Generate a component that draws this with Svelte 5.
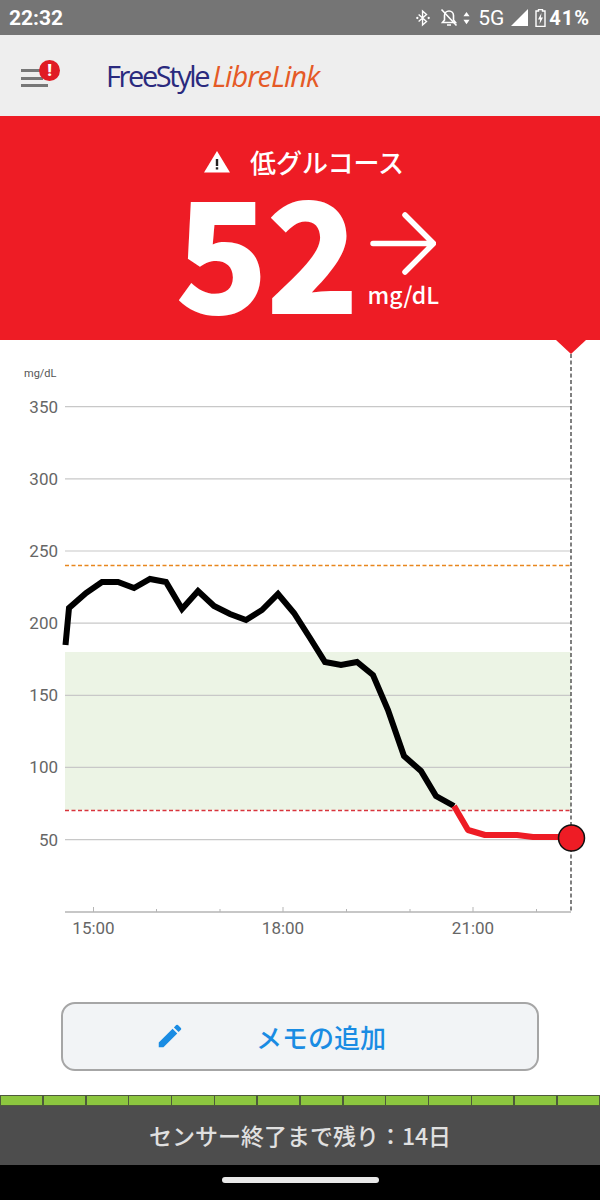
<script>
  const yLabels = [350, 300, 250, 200, 150, 100, 50];
  const yOf = (v) => 911.8 - v * 1.4433;

  const black =
    '65.5,645 69,608 86,593 102,582 118,582 134,588 150,579 166,582 182,609 198,591 214,606 230,614 246,620 262,610 278,594 294,613 310,638 325,662 341,665 357,662 373,675 388,710 404,756 421,771 436,796 454,806';
  const red = '454,806 468,830 485,835 517,835 533,837 571,837';

  const ticks = [
    { x: 93.5, label: '15:00' },
    { x: 156.5 },
    { x: 220 },
    { x: 283, label: '18:00' },
    { x: 346.5 },
    { x: 410 },
    { x: 473, label: '21:00' },
    { x: 536.5 }
  ];

  const segments = Array.from({ length: 14 });
</script>

<div class="screen">
  <div class="status">
    <span class="time">22:32</span>
    <div class="status-right">
      <svg width="14" height="18" viewBox="0 0 16 18" class="bt">
        <path d="M3 5l9 8-4.500 4V1L12 5l-9 8" fill="none" stroke="#fff" stroke-width="1.600" />
        <circle cx="1.500" cy="9" r="1.300" fill="#fff" />
        <circle cx="14.500" cy="9" r="1.300" fill="#fff" />
      </svg>
      <svg width="18" height="19" viewBox="0 0 18 19" class="bell">
        <path d="M2.500 14.500h13l-2-2.500V7.500a4.500 4.500 0 0 0-9 0V12z" fill="none" stroke="#fff" stroke-width="1.600" />
        <path d="M7 17h4M1.500 1.500l15 16" stroke="#fff" stroke-width="1.600" />
      </svg>
      <svg width="7" height="16" viewBox="0 0 8 16" class="updown">
        <path d="M4 1l3.500 5h-7zM4 15l3.500-5h-7z" fill="#fff" />
      </svg>
      <span class="net">5G</span>
      <svg width="17" height="17" viewBox="0 0 17 17" class="signal">
        <path d="M17 0v17H0z" fill="#fff" />
      </svg>
      <svg width="11" height="18" viewBox="0 0 11 18" class="batt">
        <path d="M3.500 0.500h4v1.500h2.500v15.500H1V2h2.500z" fill="none" stroke="#fff" stroke-width="1.400" />
        <path d="M6.500 4L3 10.500h2.200L4.500 15 8 8.500H5.800z" fill="#fff" />
      </svg>
      <span class="pct">41%</span>
    </div>
  </div>

  <header class="appbar">
    <div class="menu">
      <span class="line short"></span>
      <span class="line short"></span>
      <span class="line"></span>
      <span class="badge">!</span>
    </div>
    <div class="logo"><span class="free">FreeStyle</span><span class="libre">LibreLink</span></div>
  </header>

  <section class="alert">
    <div class="title">
      <svg width="28" height="24" viewBox="0 0 28 24">
        <path d="M14 2l13 21.500H1z" fill="#fff" />
        <path d="M12.800 10h2.400v7h-2.400zM12.800 18.200h2.400v2.400h-2.400z" fill="#222" />
      </svg>
      <span>低グルコース</span>
    </div>
    <div class="reading">
      <span class="value">52</span>
      <div class="side">
        <svg width="66" height="66" viewBox="0 0 66 66">
          <path d="M3 32.500h58M35 4l28.500 28.500L35 61" fill="none" stroke="#fff" stroke-width="5.500" stroke-linecap="round" stroke-linejoin="round" />
        </svg>
        <span class="unit">mg/dL</span>
      </div>
    </div>
    <span class="pointer"></span>
  </section>

  <section class="chart">
    <svg width="600" height="630" viewBox="0 340 600 630">
      <rect x="65" y="652" width="506" height="158" fill="#ecf4e5" />
      <text x="24" y="376.500" class="axis-unit">mg/dL</text>
      {#each yLabels as v}
        <line x1="65" x2="571" y1={yOf(v)} y2={yOf(v)} class="grid" />
        <text x="58" y={yOf(v) + 6} text-anchor="end" class="label">{v}</text>
      {/each}
      <line x1="65" x2="571" y1="565.500" y2="565.500" stroke="#e8861e" stroke-width="1.300" stroke-dasharray="4 2.500" />
      <line x1="65" x2="571" y1="810.500" y2="810.500" stroke="#d8343c" stroke-width="1.300" stroke-dasharray="4 2.500" />
      <line x1="65" x2="571" y1="912" y2="912" stroke="#b5b5b5" stroke-width="1.500" />
      {#each ticks as t}
        <line x1={t.x} x2={t.x} y1={t.label ? 907 : 909} y2="912" stroke="#b5b5b5" />
        {#if t.label}
          <text x={t.x} y="934" text-anchor="middle" class="label">{t.label}</text>
        {/if}
      {/each}
      <line x1="571" x2="571" y1="354" y2="912" stroke="#555" stroke-width="1.500" stroke-dasharray="4 2.500" />
      <polyline points={black} fill="none" stroke="#000" stroke-width="6" stroke-linejoin="miter" />
      <polyline points={red} fill="none" stroke="#ee1c25" stroke-width="6" stroke-linejoin="round" />
      <circle cx="571.500" cy="838" r="13" fill="#ee1c25" stroke="#111" stroke-width="1.500" />
    </svg>
  </section>

  <button class="note">
    <svg width="30" height="30" viewBox="0 0 24 24">
      <path d="M3 17.250V21h3.750L17.810 9.940l-3.750-3.750L3 17.250zM20.710 7.040a1 1 0 0 0 0-1.410l-2.340-2.340a1 1 0 0 0-1.410 0l-1.830 1.830 3.750 3.750 1.830-1.830z" fill="#1a8ce3" />
    </svg>
    <span>メモの追加</span>
  </button>

  <div class="life">
    {#each segments as _}
      <span class="seg"></span>
    {/each}
  </div>
  <div class="remaining">センサー終了まで残り：14日</div>
  <div class="nav"><span class="pill"></span></div>
</div>

<style>
  :global(body) {
    margin: 0;
    background: #fff;
  }

  .screen {
    width: 600px;
    height: 1200px;
    display: flex;
    flex-direction: column;
    overflow: hidden;
    font-family: Roboto, "Noto Sans CJK JP", sans-serif;
  }

  .status {
    height: 35px;
    background: #757575;
    color: #fff;
    display: flex;
    align-items: center;
    justify-content: space-between;
    padding: 0 10px 0 9px;
    flex: none;
  }
  .time {
    font-size: 21px;
    font-weight: 700;
  }
  .status-right {
    display: flex;
    align-items: center;
  }
  .bell {
    margin-left: 10px;
  }
  .updown {
    margin-left: 5px;
  }
  .net {
    font-size: 21px;
    margin-left: 8px;
  }
  .signal {
    margin-left: 7px;
  }
  .batt {
    margin-left: 7px;
  }
  .pct {
    font-size: 20px;
    font-weight: 700;
    margin-left: 3px;
    letter-spacing: 1px;
  }

  .appbar {
    height: 81px;
    background: #eee;
    display: flex;
    align-items: center;
    flex: none;
  }
  .menu {
    position: relative;
    width: 27px;
    margin-left: 21px;
    margin-top: 5px;
    display: flex;
    flex-direction: column;
    gap: 4.500px;
  }
  .line {
    height: 3px;
    background: #777;
    width: 27px;
  }
  .line.short {
    width: 22px;
  }
  .badge {
    position: absolute;
    left: 18px;
    top: -9px;
    width: 21px;
    height: 21px;
    border-radius: 50%;
    background: #e01b24;
    color: #fff;
    font-size: 17px;
    font-weight: 900;
    line-height: 21px;
    text-align: center;
  }
  .logo {
    margin-left: 58px;
    display: flex;
    align-items: baseline;
    gap: 4px;
    font-family: "Open Sans", sans-serif;
    font-size: 29px;
  }
  .free {
    color: #2a2a7e;
    letter-spacing: -2.400px;
    font-weight: 400;
  }
  .libre {
    color: #e55a26;
    font-style: italic;
    letter-spacing: -1px;
  }

  .alert {
    position: relative;
    height: 224px;
    background: #ee1c25;
    color: #fff;
    display: flex;
    flex-direction: column;
    align-items: center;
    font-family: "Noto Sans CJK JP", sans-serif;
    flex: none;
  }
  .title {
    display: flex;
    align-items: center;
    gap: 19px;
    margin-top: 27px;
    height: 36px;
    font-size: 26px;
    font-weight: 500;
    margin-left: 7px;
  }
  .reading {
    display: flex;
    align-items: flex-start;
    height: 160px;
    margin-left: 14px;
  }
  .value {
    font-size: 154px;
    font-weight: 900;
    line-height: 160px;
    letter-spacing: -3px;
    margin-top: -12px;
  }
  .side {
    display: flex;
    flex-direction: column;
    align-items: center;
    margin-left: 11px;
    margin-top: 32px;
  }
  .unit {
    font-size: 23px;
    font-weight: 500;
    line-height: 26px;
    margin-top: 4px;
  }
  .pointer {
    position: absolute;
    left: 556px;
    top: 224px;
    width: 0;
    height: 0;
    border-left: 15px solid transparent;
    border-right: 15px solid transparent;
    border-top: 14px solid #ee1c25;
  }

  .chart {
    height: 630px;
    flex: none;
  }
  .chart svg {
    display: block;
  }
  .grid {
    stroke: #c8c8c8;
    stroke-width: 1.200;
  }
  .label {
    font-family: Roboto, sans-serif;
    font-size: 17px;
    fill: #666;
  }
  .axis-unit {
    font-family: Roboto, sans-serif;
    font-size: 11px;
    fill: #555;
  }

  .note {
    margin: 32px 0 0 61px;
    width: 478px;
    height: 69px;
    box-sizing: border-box;
    border: 2px solid #a6a6a6;
    border-radius: 14px;
    background: #f2f4f6;
    display: flex;
    align-items: center;
    padding: 0 0 1px 92px;
    flex: none;
  }
  .note span {
    margin-left: 71px;
    font-family: "Noto Sans CJK JP", sans-serif;
    font-size: 26px;
    font-weight: 500;
    color: #1a8ce3;
  }

  .life {
    margin-top: 24px;
    height: 11px;
    box-sizing: border-box;
    display: grid;
    grid-template-columns: repeat(14, 1fr);
    gap: 1.500px;
    background: #4d5a3c;
    padding: 1px;
    flex: none;
  }
  .seg {
    background: #8cc63f;
  }
  .remaining {
    height: 59px;
    background: #4d4d4d;
    color: #e0e0e0;
    font-family: "Noto Sans CJK JP", sans-serif;
    font-size: 23px;
    font-weight: 500;
    display: flex;
    align-items: center;
    justify-content: center;
    padding-bottom: 2px;
    box-sizing: border-box;
    flex: none;
  }
  .nav {
    height: 35px;
    background: #000;
    display: flex;
    align-items: center;
    justify-content: center;
    flex: none;
  }
  .pill {
    width: 157px;
    height: 6px;
    border-radius: 3px;
    background: #e8e8e8;
    margin-bottom: 5px;
  }
</style>
